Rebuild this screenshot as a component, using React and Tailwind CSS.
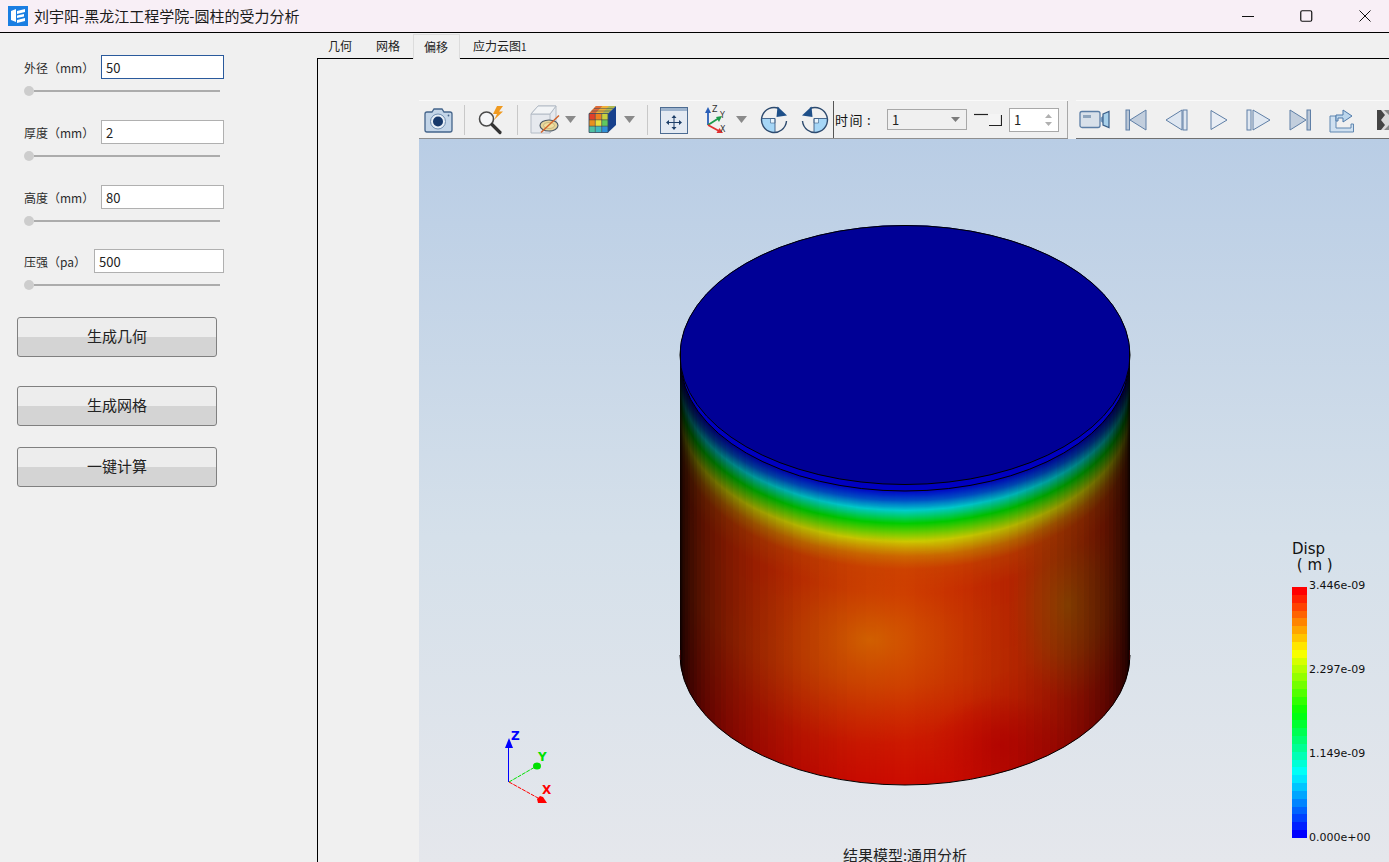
import React from "react";

const STOPS = [
  [0, 0, 0, 150], [6, 0, 0, 200], [16, 0, 80, 200], [26, 0, 204, 204], [39, 0, 204, 0],
  [57, 204, 204, 0], [72, 204, 110, 0], [85, 204, 62, 0], [110, 204, 42, 0], [200, 204, 44, 0], [300, 204, 12, 0],
];
function bandColor(d) {
  for (let i = 1; i < STOPS.length; i++) {
    const a = STOPS[i - 1], b = STOPS[i];
    if (d <= b[0]) {
      const t = (d - a[0]) / (b[0] - a[0]);
      return `rgb(${Math.round(a[1] + (b[1] - a[1]) * t)},${Math.round(a[2] + (b[2] - a[2]) * t)},${Math.round(a[3] + (b[3] - a[3]) * t)})`;
    }
  }
  return "rgb(204,12,0)";
}
const BANDS = Array.from({ length: 301 }, (_, i) => 300 - i);
const FACET_COUNT = 72;
const FACETS = Array.from({ length: FACET_COUNT }, (_, i) => {
  const a0 = -Math.PI / 2 + (i * Math.PI) / FACET_COUNT;
  const a1 = a0 + Math.PI / FACET_COUNT;
  const x0 = Math.round(905 + 225 * Math.sin(a0));
  const x1 = Math.round(905 + 225 * Math.sin(a1));
  return { x: x0, w: x1 - x0, o: 1 - Math.cos((a0 + a1) / 2) };
}).filter((f) => f.w > 0);

function legendColor(t) {
  const p = [[0, 0, 0, 255], [0.25, 0, 255, 255], [0.5, 0, 255, 0], [0.75, 255, 255, 0], [1, 255, 0, 0]];
  for (let i = 1; i < p.length; i++) {
    if (t <= p[i][0]) {
      const a = p[i - 1], b = p[i];
      const k = (t - a[0]) / (b[0] - a[0]);
      return `rgb(${Math.round(a[1] + (b[1] - a[1]) * k)},${Math.round(a[2] + (b[2] - a[2]) * k)},${Math.round(a[3] + (b[3] - a[3]) * k)})`;
    }
  }
  return "rgb(255,0,0)";
}
const LEGEND = Array.from({ length: 32 }, (_, i) => (31 - i) / 31);

function Scene() {
  return (
    <svg className="absolute inset-0" width="970" height="723" viewBox="419 139 970 723">
      <defs>
        <clipPath id="cyl">
          <path d="M680 355 L680 655 A225 130 0 0 0 1130 655 L1130 355 Z" />
        </clipPath>
        <radialGradient id="glow1">
          <stop offset="0" stopColor="#d46400" stopOpacity="0.95" />
          <stop offset="0.5" stopColor="#d05400" stopOpacity="0.5" />
          <stop offset="1" stopColor="#cc4000" stopOpacity="0" />
        </radialGradient>
        <radialGradient id="glow2">
          <stop offset="0" stopColor="#b86000" stopOpacity="0.85" />
          <stop offset="0.55" stopColor="#b85000" stopOpacity="0.5" />
          <stop offset="1" stopColor="#c04000" stopOpacity="0" />
        </radialGradient>
        <radialGradient id="red1">
          <stop offset="0" stopColor="#c00000" stopOpacity="0.7" />
          <stop offset="1" stopColor="#c00000" stopOpacity="0" />
        </radialGradient>
      </defs>
      {BANDS.map((d) => (
        <ellipse key={d} cx="905" cy={355 + d} rx="225" ry="130" fill={bandColor(d)} />
      ))}
      <g clipPath="url(#cyl)">
        <ellipse cx="870" cy="640" rx="150" ry="105" fill="url(#glow1)" />
        <ellipse cx="1068" cy="605" rx="60" ry="95" fill="url(#glow2)" />
        <ellipse cx="1000" cy="745" rx="70" ry="50" fill="url(#red1)" />
        {FACETS.map((f, i) => (
          <rect key={i} x={f.x} y="340" width={f.w} height="450" fill="#000" opacity={f.o} shapeRendering="crispEdges" />
        ))}
      </g>
      <path d="M680 655 A225 130 0 0 0 1130 655" fill="none" stroke="#000" strokeWidth="1" />
      <rect x="680" y="650" width="1" height="10" fill="#300" />
      <rect x="1129" y="650" width="1" height="10" fill="#300" />
      <ellipse cx="905" cy="362" rx="224" ry="129" fill="#0000c0" stroke="#000" strokeWidth="1" />
      <ellipse cx="905" cy="355" rx="225" ry="129.5" fill="#000096" stroke="#000" strokeWidth="1" />
      <rect x="680" y="351" width="1" height="14" fill="#000" />
      <rect x="1129" y="351" width="1" height="14" fill="#000" />

      <g fontFamily="'DejaVu Sans',sans-serif" fontWeight="700" fontSize="12">
        <line x1="508.5" y1="782" x2="508.5" y2="745" stroke="#0000ff" strokeWidth="1" />
        <path d="M509 738 L513 748 L505 748 Z" fill="#0000ff" />
        <text x="511" y="740" fill="#0000ff">Z</text>
        <line x1="509" y1="782" x2="535" y2="767" stroke="#00e000" strokeWidth="1" strokeDasharray="4 1" />
        <ellipse cx="537" cy="766" rx="4" ry="3.6" fill="#00e000" />
        <text x="538" y="761" fill="#00e000">Y</text>
        <line x1="509" y1="782" x2="538" y2="798" stroke="#ff0000" strokeWidth="1" strokeDasharray="4 1" />
        <path d="M540 796 L543 797 L547 803 L538 803 L537 799 Z" fill="#ff0000" />
        <text x="542" y="794" fill="#ff0000">X</text>
      </g>
    </svg>
  );
}

function Sep() {
  return <div className="w-px h-[30px] bg-[#c8c8c8] shrink-0" />;
}
function Caret({ className }) {
  return (
    <svg width="11" height="7" viewBox="0 0 11 7" className={className}>
      <path d="M0 0 H11 L5.5 7 Z" fill="#8a8a8a" />
    </svg>
  );
}
const S = { width: 32, height: 32, viewBox: "0 0 32 32", className: "shrink-0" };

function Camera({ className }) {
  return (
    <svg {...S} className={className}>
      <path d="M3 10 Q3 8 5 8 H10 L12 5 H20 L22 8 H28 Q30 8 30 10 V26 Q30 28 28 28 H5 Q3 28 3 26 Z" fill="#c3d5e8" stroke="#44648a" strokeWidth="1.3" />
      <circle cx="16" cy="17.5" r="7.5" fill="#e6eef6" stroke="#6f8db0" />
      <circle cx="16" cy="17.5" r="5" fill="#17396b" />
      <circle cx="26.5" cy="11.5" r="0.9" fill="#44648a" />
    </svg>
  );
}
function Magnifier({ className }) {
  return (
    <svg {...S} className={className}>
      <circle cx="11.5" cy="15" r="7" fill="#f5f6f8" stroke="#4a4a4a" strokeWidth="1.6" />
      <path d="M17 20.5 L25 28.5" stroke="#333" strokeWidth="3.2" strokeLinecap="round" />
      <path d="M22 2 L28 2 L24 7.5 L28 7.5 L19 16 L22 10 L18 10 Z" fill="#f09a20" />
    </svg>
  );
}
function BoxClip({ className }) {
  return (
    <svg {...S} className={className}>
      <path d="M2 10 L9 2 H27 V21 L21 29 H2 Z" fill="#e6e9ee" stroke="#b4bcc6" />
      <path d="M2 10 H21 V29 M21 10 L27 2" fill="none" stroke="#b4bcc6" />
      <path d="M9 2 H27 L21 10 H2 Z" fill="#f2f4f6" stroke="#b4bcc6" />
      <ellipse cx="20" cy="21.5" rx="9" ry="5.5" fill="#e6d49a" stroke="#4e5a68" strokeWidth="1.2" />
      <ellipse cx="20" cy="21.5" rx="5.5" ry="3" fill="#efdf9f" stroke="#b0a070" strokeWidth="0.6" />
      <path d="M12 28.5 L30 11.5" stroke="#d2622a" strokeWidth="1.4" />
    </svg>
  );
}
const FRONT = [
  ["#e0402a", "#ee8020", "#c8d040"],
  ["#e89020", "#e8e040", "#60c860"],
  ["#50c0a0", "#40b8c0", "#3090d8"],
];
function ColorCube({ className }) {
  return (
    <svg {...S} className={className}>
      <path d="M3 9.5 L10 2 H30 L22 9.5 Z" fill="#b0b850" />
      <path d="M10 2 H16.5 L9.5 9.5 H3 Z" fill="#e06a38" />
      <path d="M16.5 2 H23 L16 9.5 H9.5 Z" fill="#f0b038" />
      <path d="M22 9.5 L30 2 V21 L22 28.5 Z" fill="#17408c" />
      <path d="M5.5 7 H25 M8 4.5 H27.5" stroke="#33465e" strokeWidth="0.5" />
      {FRONT.map((row, r) =>
        row.map((c, k) => (
          <rect key={`${r}-${k}`} x={3 + k * 6.33} y={9.5 + r * 6.33} width="6.4" height="6.4" fill={c} />
        ))
      )}
      <path d="M3 15.8 H22 M3 22.2 H22 M9.3 9.5 V28.5 M15.7 9.5 V28.5" stroke="#3a3a3a" strokeWidth="0.6" />
      <path d="M3 9.5 H22 V28.5 H3 Z" fill="none" stroke="#33465e" strokeWidth="0.8" />
    </svg>
  );
}
function Pan({ className }) {
  return (
    <svg {...S} className={className}>
      <rect x="2.5" y="3.5" width="27" height="26" fill="#e4eaf2" stroke="#4d6c92" />
      <rect x="3" y="4" width="26" height="3" fill="#9db3cd" />
      <path d="M16 11 L18.5 14 H13.5 Z M16 26 L18.5 23 H13.5 Z M8 18.5 L11 16 V21 Z M24 18.5 L21 16 V21 Z" fill="#1e3f68" />
      <path d="M16 13 V24 M10 18.5 H22" stroke="#1e3f68" strokeWidth="1" />
    </svg>
  );
}
function Axes({ className }) {
  return (
    <svg {...S} className={className}>
      <path d="M8 21 V7" stroke="#2a5fb8" strokeWidth="1.8" />
      <path d="M8 3 L11 9 H5 Z" fill="#2a5fb8" />
      <path d="M8 21 L19 14" stroke="#1a9a4a" strokeWidth="1.8" />
      <path d="M22 12 L19 18 L16 13 Z" fill="#1a9a4a" />
      <path d="M8 21 L19 27" stroke="#e03030" strokeWidth="1.8" />
      <path d="M23 29 L16.5 29 L19.5 24 Z" fill="#e03030" />
      <g fontFamily="'DejaVu Sans',sans-serif" fontSize="8" fill="#333">
        <text x="12" y="8">Z</text>
        <text x="20" y="14">Y</text>
        <text x="20" y="28">X</text>
      </g>
    </svg>
  );
}
function Rotate({ flip, className }) {
  return (
    <svg {...S} className={`${className} ${flip ? "-scale-x-100" : ""}`}>
      <path d="M4 14.5 H17 V28.5 A12.5 12.5 0 0 1 4 14.5 Z" fill="#a6d6f6" />
      <path d="M12.5 14.5 H17 V19 H12.5 Z" fill="#e8f4fc" stroke="#3a5c84" strokeWidth="0.6" />
      <path d="M21 4.5 A12.5 12.5 0 1 0 28.5 17" fill="none" stroke="#2d4a6e" strokeWidth="1.4" />
      <path d="M3.5 14.5 H17 V28.5" fill="none" stroke="#3a5c84" strokeWidth="0.9" />
      <path d="M19.5 2.5 L29 11.5 L18.5 13 Z" fill="#1e4f88" />
    </svg>
  );
}
function Video({ className }) {
  return (
    <svg {...S} className={className}>
      <rect x="1" y="7.5" width="20" height="16" rx="2" fill="#d8e0ea" stroke="#5c7ea6" strokeWidth="1.3" />
      <rect x="4" y="11" width="8" height="3" fill="#8ea4bd" />
      <path d="M21 14 L24 12 V19 L21 17 Z" fill="#7a9cc0" />
      <path d="M24 10 L30 7.5 V23.5 L24 21 Z" fill="#a8d0ea" stroke="#385d88" strokeWidth="1.2" />
    </svg>
  );
}
const C1 = "#dfe7f1", C2 = "#5f7fa6";
function First({ className }) {
  return (
    <svg {...S} className={className}>
      <rect x="6" y="6" width="3.5" height="20" fill="#b9c6d6" stroke={C2} />
      <path d="M10 16 L26 6 V26 Z" fill="#c2cedd" stroke={C2} strokeLinejoin="round" />
    </svg>
  );
}
function Prev({ className }) {
  return (
    <svg {...S} className={className}>
      <path d="M5 16 L21 6 V26 Z" fill={C1} stroke={C2} strokeLinejoin="round" />
      <rect x="22" y="6" width="4" height="20" fill={C1} stroke={C2} />
    </svg>
  );
}
function Play({ className }) {
  return (
    <svg {...S} className={className}>
      <path d="M8 6.5 L24 16 L8 25.5 Z" fill="#e8edf4" stroke={C2} strokeLinejoin="round" />
    </svg>
  );
}
function Next({ className }) {
  return (
    <svg {...S} className={className}>
      <rect x="4" y="6" width="4" height="20" fill={C1} stroke={C2} />
      <path d="M10 6 L27 16 L10 26 Z" fill={C1} stroke={C2} strokeLinejoin="round" />
    </svg>
  );
}
function Last({ className }) {
  return (
    <svg {...S} className={className}>
      <path d="M6 6 L22 16 L6 26 Z" fill="#c2cedd" stroke={C2} strokeLinejoin="round" />
      <rect x="23" y="6" width="3.5" height="20" fill="#b9c6d6" stroke={C2} />
    </svg>
  );
}
function Share({ className }) {
  return (
    <svg {...S} className={className}>
      <path d="M5 12 H11 V24 H26 V20 H28.5 V28 H5 Z" fill="#cfe0f0" stroke="#5f86b0" />
      <path d="M11 17 V11 H18 V6 L27 12 L18 18 V14 H13 V17 Z" fill="#bcd6ec" stroke="#4d78a8" strokeLinejoin="round" />
    </svg>
  );
}
function Cut({ className }) {
  return (
    <svg width="12" height="20" viewBox="0 0 12 20" className={className}>
      <rect x="0" y="0" width="12" height="20" fill="#d8d8d8" />
      <path d="M0 0 H4 L8 5 L4 10 L8 15 L4 20 H0 Z" fill="#444" />
      <path d="M7 0 H12 V5 Z M7 20 H12 V15 Z" fill="#888" />
    </svg>
  );
}

function Toolbar() {
  return (
    <div className="h-[39px] flex shrink-0 bg-[#f0f0f0] overflow-hidden">
      <div className="flex items-center h-full border-t border-t-[#fafafa] border-b border-b-[#8f8f8f] w-[649px] shrink-0 pl-[3px]">
        <Camera />
        <div className="ml-[10px]"><Sep /></div>
        <Magnifier className="ml-[10px] shrink-0" />
        <div className="ml-[10px]"><Sep /></div>
        <BoxClip className="ml-[11px] shrink-0" />
        <Caret className="ml-[4px] shrink-0" />
        <ColorCube className="ml-[10px] shrink-0" />
        <Caret className="ml-[6px] shrink-0" />
        <div className="ml-[12px]"><Sep /></div>
        <Pan className="ml-[10px] shrink-0" />
        <Axes className="ml-[10px] shrink-0" />
        <Caret className="ml-[4px] shrink-0" />
        <Rotate className="ml-[11px] shrink-0" />
        <Rotate flip className="ml-[9px] shrink-0" />
        <div className="ml-[2px] w-px self-stretch bg-[#555] shrink-0" />
        <span className="ml-px text-[13px] leading-none tracking-[1.5px] whitespace-nowrap w-[52px] shrink-0 text-[#111]">时间<span className="ml-[3px]">:</span></span>
        <div className="w-[80px] h-[21px] shrink-0 border border-[#a8a8a8] flex items-center justify-between pl-[4px] pr-[6px] text-[13px] text-[#222]">
          <span>1</span>
          <svg width="9" height="5" viewBox="0 0 9 5"><path d="M0 0 H9 L4.5 5 Z" fill="#7c7c7c" /></svg>
        </div>
        <svg width="28" height="14" viewBox="0 0 28 14" className="ml-[7px] shrink-0">
          <rect x="15" y="1" width="12" height="11" fill="#f4f4f4" />
          <path d="M0 1.5 H14" stroke="#222" strokeWidth="1.2" />
          <path d="M15 12.5 H27.5 V2" fill="none" stroke="#222" strokeWidth="1.2" />
        </svg>
        <div className="ml-[7px] w-[50px] h-[24px] shrink-0 bg-white border border-[#a8a8a8] flex items-center justify-between pl-[4px] pr-[6px] text-[13px] text-[#222]">
          <span>1</span>
          <svg width="7" height="14" viewBox="0 0 7 14"><path d="M3.5 1 L7 5 H0 Z M3.5 13 L7 9 H0 Z" fill="#b0b0b0" /></svg>
        </div>
        <div className="ml-[8px] w-px self-stretch bg-[#a8a8a8] shrink-0" />
      </div>
      <div className="ml-[8px] flex-1 flex items-center h-full border-t border-t-[#fafafa] border-b border-b-[#707070] min-w-0 overflow-hidden">
        <Video className="ml-[3px] shrink-0" />
        <First className="ml-[9px] shrink-0" />
        <Prev className="ml-[9px] shrink-0" />
        <Play className="ml-[10px] shrink-0" />
        <Next className="ml-[8px] shrink-0" />
        <Last className="ml-[9px] shrink-0" />
        <Share className="ml-[9px] shrink-0" />
        <Cut className="ml-[20px] shrink-0" />
      </div>
    </div>
  );
}

function Field({ label, value, focused, inputW, mb }) {
  return (
    <div className={mb}>
      <div className="flex items-center justify-between w-[200px] h-[24px]">
        <span className="text-[12px] text-[#2b2b2b] whitespace-nowrap mt-[2px]">{label}</span>
        <div
          className={`${inputW} h-[24px] bg-white border ${focused ? "border-[#2a5a9c]" : "border-[#b0b0b0]"} flex items-center pl-[4px] pt-[2px] text-[13px] text-[#222]`}
        >
          {value}
        </div>
      </div>
      <div className="flex items-center mt-[6px] w-[196px] h-[12px]">
        <div className="w-[10px] h-[10px] rounded-full bg-[#cdcdcd] shrink-0" />
        <div className="flex-1 h-[2px] bg-[#acacac]" />
      </div>
    </div>
  );
}

function ActionButton({ children, mb }) {
  return (
    <button className={`${mb} w-[200px] h-[40px] flex items-center justify-center pb-px rounded-[3px] border border-[#808080] bg-[linear-gradient(#ededed_50%,#d4d4d4_50%)] text-[15px] text-[#222]`}>
      {children}
    </button>
  );
}

export default function App() {
  return (
    <div className="w-[1389px] h-[862px] overflow-hidden flex flex-col bg-[#f0f0f0] font-['Noto_Sans_CJK_SC','Noto_Sans',sans-serif]">
      <header className="h-[33px] shrink-0 bg-[#f8eff6] border-b border-black flex items-center pl-[8px]">
        <svg width="20" height="20" viewBox="0 0 20 20" className="shrink-0">
          <rect width="20" height="20" fill="#1a7ee2" />
          <path d="M3 5 L8 3 V16 L3 14 Z" fill="#fff" />
          <path d="M9 5 L17 3 V6 L9 8 Z M9 9.5 L16 8 V10.5 L9 12 Z M9 14 L17 12 V15 L9 17 Z" fill="#fff" />
        </svg>
        <span className="ml-[6px] text-[15px] text-[#1a1a1a] whitespace-nowrap">刘宇阳-黑龙江工程学院-圆柱的受力分析</span>
        <div className="ml-auto flex items-center gap-[46px] pr-[18px]">
          <svg width="12" height="12" viewBox="0 0 12 12"><path d="M0 6.5 H12" stroke="#111" strokeWidth="1" /></svg>
          <svg width="13" height="12" viewBox="0 0 13 12"><rect x="0.75" y="0.75" width="11" height="10.5" rx="1.5" fill="none" stroke="#111" strokeWidth="1.2" /></svg>
          <svg width="12" height="12" viewBox="0 0 12 12"><path d="M0.5 0.5 L11.5 11.5 M11.5 0.5 L0.5 11.5" stroke="#111" strokeWidth="1" /></svg>
        </div>
      </header>

      <div className="flex-1 flex min-h-0">
        <aside className="w-[317px] shrink-0 pt-[22px] pl-[24px]">
          <Field label="外径（mm）" value="50" focused inputW="w-[123px]" mb="mb-[23px]" />
          <Field label="厚度（mm）" value="2" inputW="w-[123px]" mb="mb-[23px]" />
          <Field label="高度（mm）" value="80" inputW="w-[123px]" mb="mb-[22px]" />
          <Field label="压强（pa）" value="500" inputW="w-[130px]" mb="mb-[26px]" />
          <div className="-ml-[7px] flex flex-col">
            <ActionButton mb="mb-[29px]">生成几何</ActionButton>
            <ActionButton mb="mb-[21px]">生成网格</ActionButton>
            <ActionButton mb="">一键计算</ActionButton>
          </div>
        </aside>

        <main className="flex-1 flex flex-col min-w-0">
          <div className="h-[25px] shrink-0 flex items-end pl-[11px] text-[12px] text-[#222]">
            <span className="h-[24px] flex items-center">几何</span>
            <span className="h-[24px] flex items-center ml-[24px]">网格</span>
            <span className="relative z-10 ml-[13px] h-[25px] -mb-px pl-[10px] pr-[11px] flex items-center bg-[#f0f0f0] border border-b-0 border-[#dcdcdc]">偏移</span>
            <span className="h-[24px] flex items-center ml-[13px]">应力云图<span className="text-[10px]">1</span></span>
          </div>
          <div className="flex-1 min-h-0 border-l border-t border-black pl-[101px] pt-[41px] flex flex-col">
            <Toolbar />
            <div className="relative flex-1 min-h-0 overflow-hidden bg-[linear-gradient(#b9cde5,#d5e0ea_55%,#e5e7ec)]">
              <Scene />
              <div className="absolute left-[873px] top-[402px] leading-[17px] text-[15px] text-[#111] font-['DejaVu_Sans',sans-serif] whitespace-pre">
                <div>Disp</div>
                <div className="-mt-px"> ( m )</div>
              </div>
              <div className="absolute left-[873px] top-[448px] w-[15px] h-[251px] flex flex-col">
                {LEGEND.map((t, i) => (
                  <div key={i} className="flex-1" style={{ background: legendColor(t) }} />
                ))}
              </div>
              <div className="absolute left-[890px] top-[440px] h-[265px] flex flex-col justify-between text-[11px] leading-[13px] text-[#111] font-['DejaVu_Sans',sans-serif]">
                <span>3.446e-09</span>
                <span>2.297e-09</span>
                <span>1.149e-09</span>
                <span>0.000e+00</span>
              </div>
              <div className="absolute left-0 w-[972px] bottom-0 text-center text-[15px] leading-[15px] text-[#222]">结果模型:通用分析</div>
            </div>
          </div>
        </main>
      </div>
    </div>
  );
}
